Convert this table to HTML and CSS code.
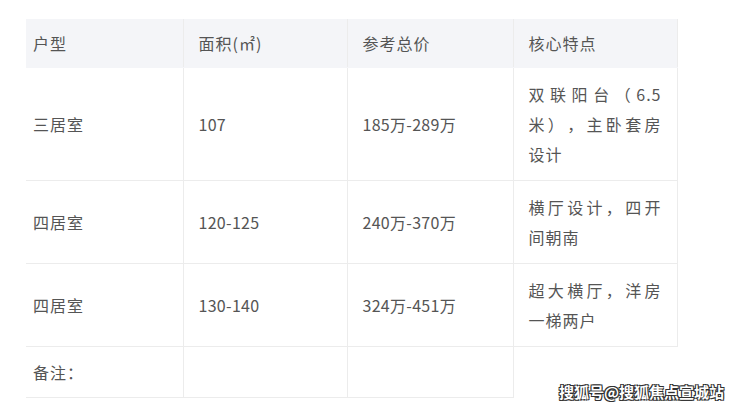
FILE: index.html
```html
<!DOCTYPE html>
<html lang="zh-CN">
<head>
<meta charset="utf-8">
<title>户型表</title>
<link rel="stylesheet" href="styles.css">
</head>
<body>
<div class="page">
  <table class="units">
    <colgroup>
      <col class="c1"><col class="c2"><col class="c3"><col class="c4">
    </colgroup>
    <thead>
      <tr>
        <th class="first">户型</th>
        <th>面积(㎡)</th>
        <th>参考总价</th>
        <th class="last">核心特点</th>
      </tr>
    </thead>
    <tbody>
      <tr>
        <td class="first">三居室</td>
        <td class="num">107</td>
        <td class="num">185万-289万</td>
        <td class="last feat">双联阳台（6.5米），主卧套房设计</td>
      </tr>
      <tr>
        <td class="first">四居室</td>
        <td class="num">120-125</td>
        <td class="num">240万-370万</td>
        <td class="last feat">横厅设计，四开间朝南</td>
      </tr>
      <tr>
        <td class="first">四居室</td>
        <td class="num">130-140</td>
        <td class="num">324万-451万</td>
        <td class="last feat">超大横厅，洋房一梯两户</td>
      </tr>
      <tr class="note">
        <td class="first">备注：</td>
        <td></td>
        <td></td>
      </tr>
    </tbody>
  </table>
  <div class="watermark">搜狐号@搜狐焦点宣城站</div>
</div>
</body>
</html>
```

FILE: styles.css
```css
html, body {
  margin: 0;
  padding: 0;
  background: #ffffff;
}

.page {
  position: relative;
  width: 740px;
  height: 412px;
  padding: 19px 0 0 26px;
  box-sizing: border-box;
  font-family: "Noto Sans CJK SC", "Noto Sans", sans-serif;
  color: #555555;
}

.units {
  border-collapse: collapse;
  table-layout: fixed;
  width: 651px;
  font-size: 16px;
  letter-spacing: 1px;
  text-spacing-trim: space-all;
}

.c1 { width: 157px; }
.c2 { width: 164px; }
.c3 { width: 166px; }
.c4 { width: 164px; }

.units th,
.units td {
  text-align: left;
  font-weight: normal;
  line-height: 30px;
  vertical-align: middle;
  padding: 11px 15px;
  border-right: 1px solid #ececec;
  border-bottom: 1px solid #ececec;
}

.units th {
  background: #f4f5f8;
  padding-top: 9px;
  padding-bottom: 9px;
  border-bottom-color: #f4f5f8;
}

.units .num {
  letter-spacing: 0.3px;
}

.units .first {
  padding-left: 7px;
}

.units .feat {
  text-align: justify;
}

.units .note td {
  padding-top: 10px;
  padding-bottom: 10px;
}

.watermark {
  position: absolute;
  right: 16px;
  bottom: 10px;
  font-size: 15px;
  font-weight: bold;
  letter-spacing: 0;
  color: #ffffff;
  text-shadow: 0 0 1px #222, 1px 1px 0 #333, -1px -1px 0 #333, 1px -1px 0 #333, -1px 1px 0 #333;
}
```
